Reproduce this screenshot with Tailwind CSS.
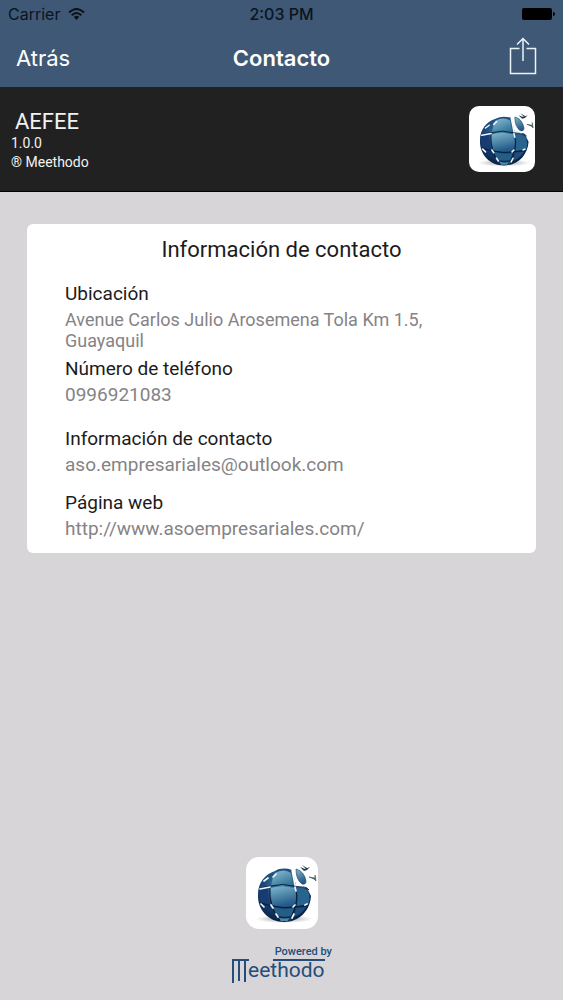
<!DOCTYPE html>
<html lang="es">
<head>
<meta charset="utf-8">
<meta name="viewport" content="width=device-width, initial-scale=1">
<title>Contacto</title>
<script src="https://cdn.jsdelivr.net/npm/@tailwindcss/browser@4"></script>
</head>
<body class="flex min-h-screen flex-col bg-[#d7d5d7] font-['Roboto',sans-serif] text-[#1c1b20]">
<svg class="absolute size-0" aria-hidden="true">
  <defs>
    <radialGradient id="sea" cx="0.45" cy="0.32" r="0.65">
      <stop offset="0" stop-color="#4c8db0"/><stop offset="0.5" stop-color="#1d4c7c"/><stop offset="1" stop-color="#0b2248"/>
    </radialGradient>
    <linearGradient id="tile" x1="0" y1="0" x2="0.6" y2="1">
      <stop offset="0" stop-color="#8fc0d2"/><stop offset="1" stop-color="#34759a"/>
    </linearGradient>
    <linearGradient id="mid" x1="0" y1="0" x2="0.3" y2="1">
      <stop offset="0" stop-color="#80b8cc"/><stop offset="1" stop-color="#235a89"/>
    </linearGradient>
    <radialGradient id="shade"><stop offset="0" stop-color="#777" stop-opacity="0.8"/><stop offset="1" stop-color="#999" stop-opacity="0"/></radialGradient>
    <symbol id="globe" viewBox="0 0 72 72">
      <ellipse cx="38" cy="62" rx="29" ry="4" fill="url(#shade)"/>
      <path d="M46 13C40 11 34 11 29 14C19 17 12 26 12 37C11 53 23 65 38 65C53 65 64 54 65 39L61 31L50 28Z" fill="url(#sea)"/>
      <path d="M29 16Q38 11 45 16L47 28Q36 27 25 29Q26 22 29 16Z" fill="url(#tile)"/>
      <path d="M24 31Q36 28 49 31Q51 41 49 49Q37 51 26 48Q24 39 24 31Z" fill="url(#mid)"/>
      <path d="M51 31Q58 30 62 34Q65 41 62 48L51 49Q52 39 51 31Z" fill="#28648d"/>
      <path d="M13 34Q17 31 22 31Q22 40 24 47L15 45Q12 39 13 34Z" fill="#173c73"/>
      <path d="M27 50Q38 53 48 51L46 59Q37 61 30 58Z" fill="#245e86"/>
      <path d="M50 51L60 50Q56 57 48 60Z" fill="#1d4d7a"/>
      <path d="M16 47L24 49L28 58Q20 55 16 47Z" fill="#123464"/>
      <path d="M31 60Q39 63 46 60L43 64H35Z" fill="#4e8ba9"/>
      <path d="M13 33Q18 29 25 29Q37 26 47 29Q58 27 63 33M24 30Q23 39 26 49Q28 57 34 63M49 29Q53 42 48 53Q46 60 42 64M26 49Q37 52 49 50L62 48M15 46L26 49" fill="none" stroke="#071c38" stroke-width="1"/>
      <path d="M14 32L24 30M27 20L30 17M18 24L22 21M49 30L50 34M25 48L27 51M47 50L49 48M15 47L18 50M59 48L61 47M48 57L46 61M30 57L32 60" fill="none" stroke="#edf8ff" stroke-width="1.7" stroke-linecap="round"/>
      <path d="M50 12Q58 14 60 24Q60 28 56 27Q50 23 50 12Z" fill="url(#mid)" stroke="#2b4b61" stroke-width="0.7"/>
      <path d="M54 10L59 12L64 10L61 13L58 14ZM60 12L56 8L61 11Z" fill="#24394b"/>
      <path d="M63 20L69 21V18L70 24L68 22Z" fill="#43545e" stroke="#43545e" stroke-width="0.6"/>
      <path d="M46 13L49 28L61 29" fill="none" stroke="#fff" stroke-width="1.6"/>
    </symbol>
  </defs>
</svg>

<header class="bg-[#3f5875] font-['Inter',sans-serif]">
  <div class="grid h-7 grid-cols-3 items-center px-2 text-base text-[#0b1420]">
    <div class="flex items-center gap-2">
      <span>Carrier</span>
      <svg class="h-3 w-[17px]" viewBox="0 0 17 12" fill="none" stroke="#0b1118" stroke-width="2" aria-label="Wi-Fi"><path d="M1 4.5Q8.500-2.500 16 4.500M3.700 7.300Q8.500 2.700 13.300 7.300"/><path d="M5.800 9Q8.500 6.700 11.200 9L8.500 12Z" fill="#0b1118" stroke="none"/></svg>
    </div>
    <span class="text-center font-medium">2:03 PM</span>
    <svg class="h-3 w-[33px] justify-self-end" viewBox="0 0 33 12" aria-label="Batería"><rect width="30" height="12" rx="2"/><path d="M31 4Q33 4 33 6T31 8Z"/></svg>
  </div>
  <nav class="grid h-[59px] grid-cols-3 items-center px-4 text-white">
    <button class="justify-self-start text-[22px] leading-7">Atrás</button>
    <h1 class="text-center text-[22px] leading-7 font-semibold">Contacto</h1>
    <button class="mr-2.5 mb-1 justify-self-end" aria-label="Compartir">
      <svg class="h-[38px] w-7" viewBox="0 0 28 38" fill="none" stroke="#e9f3fa" stroke-width="1.500"><path d="M10.500 11.500H1.500V36.500H26.500V11.500H17.500M14 24V1.500M8 7.500L14 1.500L20 7.500"/></svg>
    </button>
  </nav>
</header>

<section class="flex h-[105px] items-center justify-between border-b border-black bg-[#212122] pr-7 pl-[11px] text-[#f2f2f2]">
  <div class="pt-1">
    <h2 class="pl-1 text-[22px] leading-6">AEFEE</h2>
    <p class="text-sm leading-[19px]">1.0.0</p>
    <p class="text-sm leading-[19px]">® Meethodo</p>
  </div>
  <svg class="size-[66px] rounded-[10px] bg-white" role="img" aria-label="AEFEE"><use href="#globe"/></svg>
</section>

<main class="flex flex-1 flex-col px-[27px] pt-8">
  <section class="rounded-md bg-white pt-3 pb-3.5">
    <h2 class="text-center text-[22px] leading-7">Información de contacto</h2>
    <dl class="mt-[18px] px-[38px] text-[19px] leading-[21px] text-[#858386] [&_dt]:leading-6 [&_dt]:text-[#1c1b20] [&_dd]:mt-[3px]">
      <div><dt>Ubicación</dt><dd class="max-w-96 text-lg leading-[21px]">Avenue Carlos Julio Arosemena Tola Km 1.5, Guayaquil</dd></div>
      <div class="mt-1.5"><dt>Número de teléfono</dt><dd><a href="tel:0996921083">0996921083</a></dd></div>
      <div class="mt-[22px]"><dt>Información de contacto</dt><dd><a href="mailto:aso.empresariales@outlook.com">aso.empresariales@outlook.com</a></dd></div>
      <div class="mt-4"><dt>Página web</dt><dd><a href="http://www.asoempresariales.com/">http://www.asoempresariales.com/</a></dd></div>
    </dl>
  </section>
  <footer class="mt-auto flex flex-col items-center pb-4 text-[#244d7b]">
    <svg class="size-[72px] rounded-[13px] bg-white" role="img" aria-label="AEFEE"><use href="#globe"/></svg>
    <div class="mt-4 flex w-[101px] flex-col">
      <span class="text-right text-[11px] leading-[14px] font-medium">Powered by</span>
      <div class="relative h-[25px]" role="img" aria-label="Meethodo">
        <svg class="absolute inset-0 h-[25px] w-full" viewBox="0 0 101 25" fill="none" stroke="#244d7b" stroke-width="2" aria-hidden="true"><path d="M2 24V1M1 1H18M8 1V22M14 1V23M42 1H94"/></svg>
        <span class="block pl-[17px] text-[21px] leading-[23px]">eethodo</span>
      </div>
    </div>
  </footer>
</main>
</body>
</html>
